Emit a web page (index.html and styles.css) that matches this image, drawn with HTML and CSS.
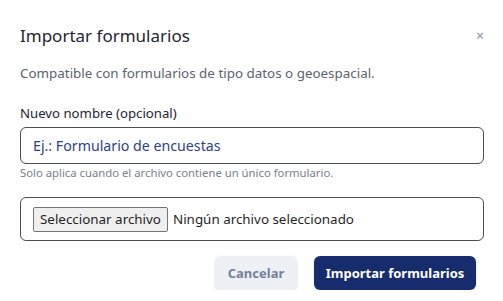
FILE: index.html
```html
<!DOCTYPE html>
<html lang="es">
<head>
    <meta charset="UTF-8">
    <title>Importar formularios</title>
    <link rel="stylesheet" href="styles.css">
</head>
<body>

<div class="modal">
    <div class="modal-header">
        <h2>Importar formularios</h2>
        <span class="close">&times;</span>
    </div>

    <p class="description">Compatible con formularios de tipo datos o geoespacial.</p>

    <!-- Nombre -->
    <div class="field">
        <label for="name">Nuevo nombre (opcional)</label>
        <input type="text" id="name" class="text-input" placeholder="Ej.: Formulario de encuestas">
        <small class="hint">Solo aplica cuando el archivo contiene un único formulario.</small>
    </div>

    <!-- Archivo -->
    <div class="file-box">
        <button class="file-button">Seleccionar archivo</button>
        <span class="file-name">Ningún archivo seleccionado</span>
    </div>

    <div class="modal-footer">
        <button class="cancel-button">Cancelar</button>
        <button class="import-button">Importar formularios</button>
    </div>
</div>

</body>
</html>
```

FILE: styles.css
```css
body {
    font-family: "Noto Sans", Arial, sans-serif;
    margin: 0;
    padding: 0;
    background-color: #ffffff;
    color: #1f2937;
}
.modal {
    width: 503px;
    padding: 22px 19px 0 20px;
    box-sizing: border-box;
}
.modal-header {
    display: flex;
    justify-content: space-between;
    align-items: center;
    height: 26px;
}
.modal-header h2 {
    margin: 0;
    font-size: 17px;
    font-weight: 400;
    color: #1e2433;
}
.close {
    font-size: 14px;
    color: #8a8f9c;
}
.description {
    margin: 13px 0 0 0;
    font-size: 13.4px;
    color: #5b6270;
    line-height: 24px;
}
.field {
    margin-top: 19px;
}
.field label {
    display: block;
    font-size: 13.2px;
    color: #1e2433;
    line-height: 18px;
}
.text-input {
    display: block;
    width: 100%;
    box-sizing: border-box;
    height: 37px;
    margin-top: 5px;
    padding: 0 12px;
    border: 1px solid #4a4d55;
    border-radius: 6px;
    font-family: inherit;
    font-size: 14.2px;
    outline: none;
}
.text-input::placeholder {
    color: #2e3f87;
    opacity: 1;
}
.hint {
    display: block;
    font-size: 11.3px;
    color: #7b808a;
    margin-top: 2px;
    line-height: 14px;
}
.file-box {
    display: flex;
    align-items: center;
    height: 44px;
    box-sizing: border-box;
    margin-top: 17px;
    padding: 0 12px;
    border: 1px solid #4a4d55;
    border-radius: 6px;
}
.file-button {
    height: 25px;
    padding: 0 6px;
    margin-right: 5px;
    background-color: #efefef;
    border: 1px solid #767676;
    border-radius: 2px;
    font-family: "Noto Sans", Arial, sans-serif;
    font-size: 13.4px;
    color: #1f1f1f;
}
.file-name {
    font-size: 13.4px;
    color: #1f1f1f;
}
.modal-footer {
    display: flex;
    justify-content: flex-end;
    gap: 17px;
    margin-top: 15px;
    padding-right: 8px;
}
.cancel-button, .import-button {
    height: 34px;
    border: none;
    border-radius: 6px;
    font-family: inherit;
    font-size: 13px;
    font-weight: 700;
    cursor: pointer;
    box-shadow: 0 1px 3px rgba(0, 0, 0, 0.12);
}
.cancel-button {
    width: 82px;
    background-color: #edf1f6;
    color: #75819a;
}
.import-button {
    width: 162px;
    background-color: #172c6c;
    color: #ffffff;
}
```
